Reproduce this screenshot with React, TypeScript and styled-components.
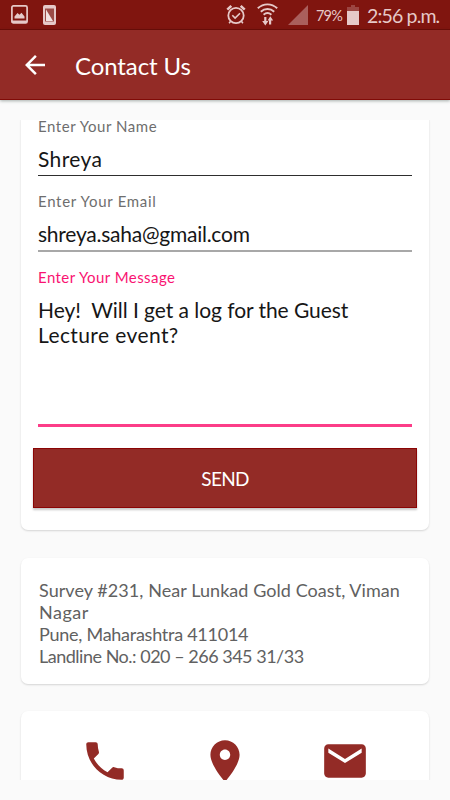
import React from "react";
import styled, { createGlobalStyle } from "styled-components";

const brand = "#932b26";
const brandEdge = "#8b0505";
const statusTint = "#e6c9c8";

const GlobalStyle = createGlobalStyle`
  * { box-sizing: border-box; }
  body {
    margin: 0;
    background: #fafafa;
    font-family: Lato, "Open Sans", sans-serif;
  }
`;

const Screen = styled.div`
  display: flex;
  flex-direction: column;
  width: 450px;
  height: 800px;
  overflow: hidden;
  background: #fafafa;
`;

const StatusBar = styled.div`
  display: flex;
  flex: none;
  align-items: center;
  justify-content: space-between;
  height: 30px;
  padding: 0 9px 0 11px;
  background: #80150f;
  border-bottom: 1px solid #6c0a06;
  color: ${statusTint};
`;

const StatusGroup = styled.div`
  display: flex;
  align-items: center;
  height: 29px;
`;

const StatusIcon = styled.svg<{ $gap?: number }>`
  display: block;
  flex: none;
  margin-right: ${(p) => p.$gap ?? 0}px;
`;

const Percent = styled.span`
  width: 31px;
  padding-top: 2px;
  font-size: 14.5px;
  line-height: 20px;
  letter-spacing: -0.8px;
  white-space: nowrap;
`;

const Clock = styled.span`
  padding-top: 3px;
  width: 74px;
  font-size: 19.5px;
  line-height: 24px;
  letter-spacing: -0.85px;
  white-space: nowrap;
`;

const AppBar = styled.header`
  display: flex;
  flex: none;
  align-items: center;
  height: 70px;
  padding-left: 20px;
  background: ${brand};
  border-bottom: 1px solid #800b07;
  box-shadow: 0 1px 3px rgba(40, 60, 55, 0.4);
`;

const Title = styled.h1`
  margin: 2px 0 0 25px;
  color: #fff;
  font-size: 24px;
  font-weight: 400;
  line-height: 30px;
  letter-spacing: -0.1px;
`;

const Content = styled.main`
  display: flex;
  flex-direction: column;
  height: 660px;
  margin-top: 20px;
  padding: 0 21px;
  overflow: hidden;
`;

const Card = styled.section`
  flex: none;
  background: #fff;
  border-radius: 7px;
  box-shadow: 0 1px 2px rgba(0, 0, 0, 0.15);
`;

const FormCard = styled(Card)`
  height: 417px;
  margin: -7px 0 28px;
  padding: 4px 12px 0;
`;

const Field = styled.div<{ $gap: number }>`
  margin: 0 5px ${(p) => p.$gap}px;
`;

const Label = styled.div<{ $active?: boolean; $track: number }>`
  margin-bottom: 11px;
  color: ${(p) => (p.$active ? "#f91372" : "#6e6e6e")};
  font-size: 15px;
  line-height: 18px;
  letter-spacing: ${(p) => p.$track}px;
`;

const Value = styled.div<{ $track: number; $line: string }>`
  padding-bottom: 4px;
  border-bottom: ${(p) => p.$line};
  color: #161616;
  font-size: 21px;
  line-height: 25px;
  letter-spacing: ${(p) => p.$track}px;
  white-space: pre;
`;

const Message = styled(Value)`
  height: 130px;
`;

const MessageLine = styled.div<{ $track: number }>`
  letter-spacing: ${(p) => p.$track}px;
`;

const SendButton = styled.button`
  display: block;
  width: 384px;
  height: 60px;
  margin: 0;
  padding: 1px 0 0;
  border: 1px solid ${brandEdge};
  background: ${brand};
  box-shadow: 0 2px 2px rgba(0, 0, 0, 0.22);
  color: #fff;
  font-family: inherit;
  font-size: 19px;
  letter-spacing: -0.7px;
`;

const AddressCard = styled(Card)`
  height: 126px;
  margin-bottom: 27px;
  padding: 21px 18px 0;
  color: #616161;
  font-size: 18px;
  line-height: 22px;
`;

const AddressLine = styled.div<{ $track: number }>`
  letter-spacing: ${(p) => p.$track}px;
  white-space: nowrap;
`;

const ActionsCard = styled(Card)`
  display: grid;
  grid-template-columns: repeat(3, 120px);
  justify-content: center;
  justify-items: center;
  height: 100px;
  padding-top: 25px;
`;

const MaterialIcon = ({ d, size, color }: { d: string; size: number; color: string }) => (
  <svg width={size} height={size} viewBox="0 0 24 24" fill={color}>
    <path d={d} />
  </svg>
);

const backPath = "M20 11H7.83l5.59-5.59L12 4l-8 8 8 8 1.41-1.41L7.83 13H20v-2z";
const actionPaths = [
  "M6.62 10.79c1.44 2.83 3.76 5.14 6.59 6.59l2.2-2.2c.27-.27.67-.36 1.02-.24 1.12.37 2.33.57 3.57.57.55 0 1 .45 1 1V20c0 .55-.45 1-1 1-9.39 0-17-7.61-17-17 0-.55.45-1 1-1h3.5c.55 0 1 .45 1 1 0 1.25.2 2.45.57 3.57.11.35.03.74-.25 1.02l-2.2 2.2z",
  "M12 2C8.13 2 5 5.13 5 9c0 5.25 7 13 7 13s7-7.75 7-13c0-3.87-3.13-7-7-7zm0 9.5c-1.38 0-2.5-1.12-2.5-2.5s1.12-2.5 2.5-2.5 2.5 1.12 2.5 2.5-1.12 2.5-2.5 2.5z",
  "M20 4H4c-1.1 0-1.99.9-1.99 2L2 18c0 1.1.9 2 2 2h16c1.1 0 2-.9 2-2V6c0-1.1-.9-2-2-2zm0 4l-8 5-8-5V6l8 5 8-5v2z",
];

const address: [string, number][] = [
  ["Survey #231, Near Lunkad Gold Coast, Viman", 0.06],
  ["Nagar", 0.5],
  ["Pune, Maharashtra 411014", -0.26],
  ["Landline No.: 020 – 266 345 31/33", -0.49],
];

const PictureIcon = () => (
  <StatusIcon $gap={15} width="17" height="19" viewBox="0 0 17 19">
    <rect x="0.9" y="0.9" width="15.2" height="17" rx="1.5" fill="none" stroke={statusTint} strokeWidth="1.7" />
    <path d="M1 15.5h15v2.5h-15z" fill={statusTint} />
    <path d="M3.5 13.5v-2l3-3.5 2 1.7 2-2 3 3.8v2z" fill={statusTint} />
  </StatusIcon>
);

const PhoneScreenIcon = () => (
  <StatusIcon width="13" height="20" viewBox="0 0 13 20">
    <rect width="13" height="20" rx="2" fill={statusTint} />
    <path d="M2 3.5h9v13H2z" fill="#9c4b46" />
    <path d="M3 4.5l7 11.5H3z" fill="#f2e3e2" />
  </StatusIcon>
);

const AlarmIcon = () => (
  <StatusIcon $gap={11} width="20" height="21" viewBox="0 0 20 21">
    <g fill="none" stroke={statusTint}>
      <circle cx="10" cy="11.5" r="7.7" strokeWidth="1.8" />
      <path d="M1.3 5.6l4-3.7M18.7 5.6l-4-3.7" strokeWidth="2.6" />
      <path d="M6.3 11.2l2.8 2.9 4.9-4.9" strokeWidth="1.6" />
      <path d="M4.6 17.2l-1.5 2M15.4 17.2l1.5 2" strokeWidth="1.5" />
    </g>
  </StatusIcon>
);

const WifiIcon = () => (
  <StatusIcon $gap={10} width="21" height="23" viewBox="0 0 21 23">
    <g fill="none" stroke={statusTint} strokeWidth="1.9">
      <path d="M0.8 5.3c5.6-5.3 13.8-5.3 19.4 0" />
      <path d="M3.8 8.7c3.9-3.6 9.5-3.6 13.4 0" />
      <path d="M6.6 11.8c2.3-2 5.5-2 7.8 0" />
    </g>
    <path d="M7.2 14h2.2v4h2l-3.1 4.5L5.2 18h2zM12 21.5v-4h-1.4l2.7-4.3 2.9 4.3h-2v4z" fill={statusTint} />
  </StatusIcon>
);

const SignalIcon = () => (
  <StatusIcon $gap={8} width="20" height="20" viewBox="0 0 20 20">
    <path d="M20 0v20H0z" fill="#aa5f5c" />
  </StatusIcon>
);

const BatteryIcon = () => (
  <StatusIcon $gap={8} width="12" height="20" viewBox="0 0 12 20">
    <path d="M4 0h4v2h4v4H0V2h4z" fill="#9b4541" />
    <path d="M0 6h12v14H0z" fill={statusTint} />
  </StatusIcon>
);

export default function App() {
  return (
    <Screen>
      <GlobalStyle />
      <StatusBar>
        <StatusGroup>
          <PictureIcon />
          <PhoneScreenIcon />
        </StatusGroup>
        <StatusGroup>
          <AlarmIcon />
          <WifiIcon />
          <SignalIcon />
          <Percent>79%</Percent>
          <BatteryIcon />
          <Clock>2:56 p.m.</Clock>
        </StatusGroup>
      </StatusBar>
      <AppBar>
        <MaterialIcon d={backPath} size={30} color="#fff" />
        <Title>Contact Us</Title>
      </AppBar>
      <Content>
        <FormCard>
          <Field $gap={16}>
            <Label $track={0.55}>Enter Your Name</Label>
            <Value $track={0.4} $line="1px solid #2e2e2e">Shreya</Value>
          </Field>
          <Field $gap={16}>
            <Label $track={0.7}>Enter Your Email</Label>
            <Value $track={-0.24} $line="2px solid #a8a8a8">shreya.saha@gmail.com</Value>
          </Field>
          <Field $gap={21}>
            <Label $track={0.43} $active>Enter Your Message</Label>
            <Message $track={0} $line="3px solid #fc3d88">
              <MessageLine $track={-0.05}>{"Hey!  Will I get a log for the Guest"}</MessageLine>
              <MessageLine $track={0.4}>Lecture event?</MessageLine>
            </Message>
          </Field>
          <SendButton>SEND</SendButton>
        </FormCard>
        <AddressCard>
          {address.map(([text, track]) => (
            <AddressLine key={text} $track={track}>{text}</AddressLine>
          ))}
        </AddressCard>
        <ActionsCard>
          {actionPaths.map((d) => (
            <MaterialIcon key={d} d={d} size={50} color={brand} />
          ))}
        </ActionsCard>
      </Content>
    </Screen>
  );
}
